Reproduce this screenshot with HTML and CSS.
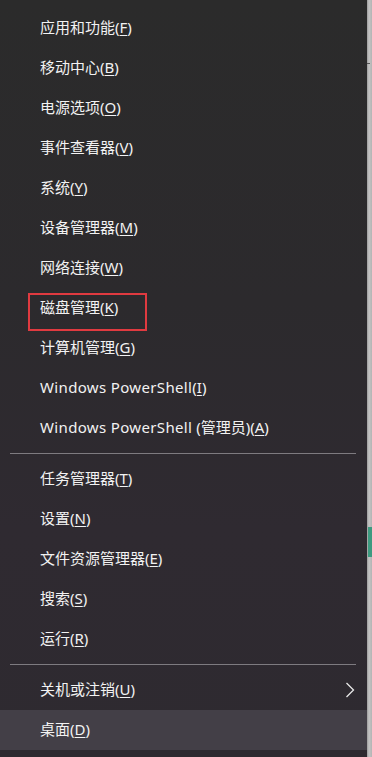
FILE: index.html
```html
<!DOCTYPE html>
<html lang="zh-CN">
<head>
    <meta charset="UTF-8">
    <meta name="viewport" content="width=device-width, initial-scale=1.0">
    <title>Win+X</title>
    <link rel="stylesheet" href="styles.css">
</head>
<body>
    <div class="screen">
        <ul class="menu">
            <li class="item">应用和功能(<u>F</u>)</li>
            <li class="item">移动中心(<u>B</u>)</li>
            <li class="item">电源选项(<u>O</u>)</li>
            <li class="item">事件查看器(<u>V</u>)</li>
            <li class="item">系统(<u>Y</u>)</li>
            <li class="item">设备管理器(<u>M</u>)</li>
            <li class="item">网络连接(<u>W</u>)</li>
            <li class="item marked">磁盘管理(<u>K</u>)<span class="mark"></span></li>
            <li class="item">计算机管理(<u>G</u>)</li>
            <li class="item"><span class="latin">Windows PowerShell</span>(<u>I</u>)</li>
            <li class="item"><span class="latin">Windows PowerShell</span>&nbsp;(管理员)(<u>A</u>)</li>
            <li class="sep"></li>
            <li class="item">任务管理器(<u>T</u>)</li>
            <li class="item">设置(<u>N</u>)</li>
            <li class="item">文件资源管理器(<u>E</u>)</li>
            <li class="item">搜索(<u>S</u>)</li>
            <li class="item">运行(<u>R</u>)</li>
            <li class="sep"></li>
            <li class="item has-sub">关机或注销(<u>U</u>)
                <svg class="arrow" width="10" height="16" viewBox="0 0 10 16">
                    <path d="M1.5 1 L8.5 8 L1.5 15" fill="none" stroke="#e8e8e8" stroke-width="1.3"/>
                </svg>
            </li>
            <li class="item active">桌面(<u>D</u>)</li>
        </ul>
        <div class="edge">
            <span class="edge-tick"></span>
            <span class="edge-teal"></span>
        </div>
    </div>
</body>
</html>
```

FILE: styles.css
```css
html, body {
    margin: 0;
    padding: 0;
    background: #2b292d;
}
.screen {
    display: flex;
    width: 372px;
    height: 757px;
    overflow: hidden;
}
.menu {
    list-style: none;
    margin: 0;
    padding: 8px 0 0;
    width: 367px;
    background: linear-gradient(180deg, #2b2b2b 0%, #2c2a2d 40%, #2f2a31 70%, #2e2a30 100%);
    font-family: "Noto Sans", "Noto Sans CJK SC", sans-serif;
    font-size: 15px;
    color: #f2f2f2;
}
.item {
    position: relative;
    display: flex;
    align-items: center;
    height: 40px;
    box-sizing: border-box;
    padding: 0 0 3px 40px;
}
.item u {
    text-decoration-thickness: 1px;
    text-underline-offset: 2px;
}
.latin {
    letter-spacing: 0.35px;
}
.sep {
    height: 11px;
    position: relative;
}
.sep::after {
    content: "";
    position: absolute;
    left: 10px;
    right: 11px;
    top: 5px;
    height: 1px;
    background: #7e7b80;
}
.mark {
    position: absolute;
    left: 28px;
    top: 5px;
    width: 115px;
    height: 34px;
    border: 2px solid #e03a40;
}
.arrow {
    position: absolute;
    right: 12px;
    top: 12px;
}
.active {
    background: #433f47;
}
.edge {
    position: relative;
    flex: 1;
    background: linear-gradient(90deg, #9c9c9c 0%, #c4c4c4 40%, #b4b4b4 100%);
}
.edge-tick {
    position: absolute;
    left: 0;
    top: 63px;
    width: 3px;
    height: 1px;
    background: #555;
}
.edge-teal {
    position: absolute;
    left: 1px;
    right: 0;
    top: 527px;
    height: 30px;
    background: #3d9a80;
}
```
